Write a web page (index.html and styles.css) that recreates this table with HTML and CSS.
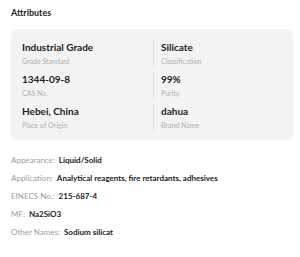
FILE: index.html
```html
<!DOCTYPE html>
<html lang="en">
<head>
    <meta charset="UTF-8">
    <meta name="viewport" content="width=device-width, initial-scale=1.0">
    <title>Attributes</title>
    <link rel="stylesheet" href="styles.css">
</head>
<body>
    <h3 class="attr-title">Attributes</h3>

    <div class="attr-card">
        <div class="attr-col">
            <div class="attr-item">
                <div class="attr-value">Industrial Grade</div>
                <div class="attr-label">Grade Standard</div>
            </div>
            <div class="attr-item">
                <div class="attr-value">1344-09-8</div>
                <div class="attr-label">CAS No.</div>
            </div>
            <div class="attr-item">
                <div class="attr-value">Hebei, China</div>
                <div class="attr-label">Place of Origin</div>
            </div>
        </div>
        <div class="attr-col right">
            <div class="attr-item">
                <div class="attr-value">Silicate</div>
                <div class="attr-label">Classification</div>
            </div>
            <div class="attr-item">
                <div class="attr-value">99%</div>
                <div class="attr-label">Purity</div>
            </div>
            <div class="attr-item">
                <div class="attr-value">dahua</div>
                <div class="attr-label">Brand Name</div>
            </div>
        </div>
    </div>

    <ul class="attr-list">
        <li><span class="key">Appearance:</span><span class="val">Liquid/Solid</span></li>
        <li><span class="key">Application:</span><span class="val">Analytical reagents, fire retardants, adhesives</span></li>
        <li><span class="key">EINECS No.:</span><span class="val">215-687-4</span></li>
        <li><span class="key">MF:</span><span class="val">Na2SiO3</span></li>
        <li><span class="key">Other Names:</span><span class="val">Sodium silicat</span></li>
    </ul>
</body>
</html>
```

FILE: styles.css
```css
body {
    margin: 0;
    padding: 6px 7px 0 11px;
    font-family: Lato, "Open Sans", Arial, sans-serif;
    color: #222;
    background: #fff;
}
.attr-title {
    margin: 0;
    font-size: 9px;
    font-weight: bold;
    line-height: 14px;
}
.attr-card {
    display: grid;
    grid-template-columns: 131px 1fr;
    margin-top: 9px;
    padding: 11px 0 10px 11px;
    background: #f3f3f3;
    border-radius: 6px;
}
.attr-item {
    margin-bottom: 6px;
}
.attr-item:last-child {
    margin-bottom: 0;
}
.attr-col.right .attr-item {
    border-left: 1px solid #e0e0e0;
    padding-left: 7px;
}
.attr-value {
    font-size: 10px;
    font-weight: bold;
    line-height: 14px;
    margin-bottom: 2px;
}
.attr-label {
    font-size: 7px;
    color: #b0b0b0;
    line-height: 10px;
}
.attr-list {
    list-style: none;
    margin: 11px 0 0;
    padding: 0;
}
.attr-list li {
    font-size: 8px;
    line-height: 18px;
}
.attr-list .key {
    color: #9d9d9d;
    margin-right: 4px;
}
.attr-list .val {
    font-weight: bold;
    color: #222;
}
```
